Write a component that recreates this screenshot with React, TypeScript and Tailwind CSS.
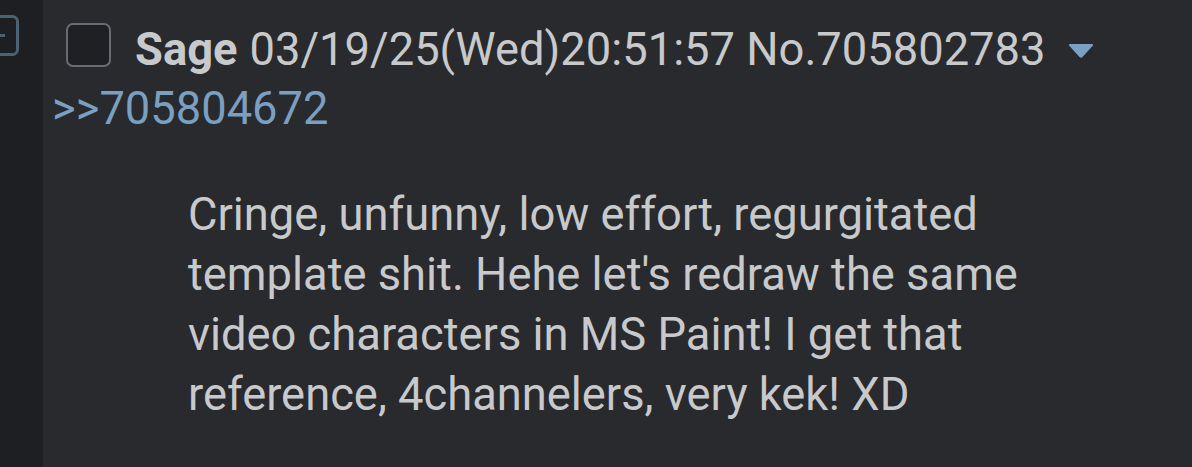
import React from "react";

export default function App() {
  return (
    <div
      className="flex w-[1192px] h-[467px] bg-[#292a2e] overflow-hidden"
      style={{ fontFamily: "Roboto, 'Liberation Sans', sans-serif" }}
    >
      <div className="w-[43px] shrink-0 bg-[#1e1f22] overflow-hidden pt-[15px]">
        <svg width="41" height="41" viewBox="0 0 41 41" className="ml-[-22px]">
          <rect x="1.5" y="1.5" width="38" height="38" rx="5" fill="none" stroke="#4a6273" strokeWidth="3" />
          <rect x="14" y="19" width="13" height="3" fill="#4a6273" />
        </svg>
      </div>
      <div className="flex-1 flex flex-col">
        <div className="flex items-start pt-[21px]">
          <div className="ml-[23px] mt-[2px] w-[45px] h-[44px] rounded-[7px] border-[2.5px] border-[#6a6a72] bg-[#1f2024] shrink-0" />
          <div className="ml-[24px] flex items-center text-[45.3px] leading-[57px] text-[#c8c9cb] whitespace-nowrap">
            <span className="font-bold">Sage</span>
            <span className="ml-[12px]">03/19/25(Wed)20:51:57 No.705802783</span>
            <svg width="28" height="17" viewBox="0 0 28 17" className="ml-[22px] mt-[2px]">
              <path d="M3 2 L25 2 Q27 2 25.5 4 L15.5 15 Q14 16.5 12.5 15 L2.5 4 Q1 2 3 2 Z" fill="#7aa0c4" />
            </svg>
          </div>
        </div>
        <div className="ml-[9px] mt-[1px] text-[45.3px] leading-[60px] text-[#7a9fc0]">&gt;&gt;705804672</div>
        <div className="ml-[145px] mt-[46px] w-[860px] text-[45.3px] leading-[60px] text-[#c8c9cb]">
          Cringe, unfunny, low effort, regurgitated template shit. Hehe let's redraw the same video characters in MS Paint! I get that reference, 4channelers, very kek! XD
        </div>
      </div>
    </div>
  );
}
